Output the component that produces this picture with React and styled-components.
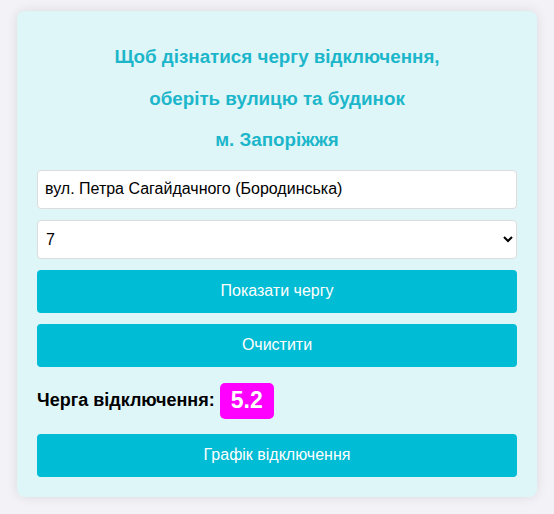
import styled, { createGlobalStyle } from 'styled-components'

const GlobalStyle = createGlobalStyle`
    body {
        margin: 0;
        background-color: #f3f2f7;
        font-family: "Liberation Sans", Arial, sans-serif;
    }
`

const Page = styled.div`
    padding: 11px 17px;
`

const Card = styled.div`
    width: 520px;
    box-sizing: border-box;
    padding: 25px 20px 20px 20px;
    background-color: #dff6f9;
    border-radius: 8px;
    box-shadow: 0 0 12px rgba(0, 0, 0, 0.1);
`

const Title = styled.div`
    text-align: center;
    color: #1cb6ca;
    font-size: 18.8px;
    font-weight: bold;
    line-height: 41.5px;
    margin-bottom: 9px;
`

const Form = styled.div`
    display: flex;
    flex-direction: column;
    gap: 11px;
`

const Field = styled.input`
    height: 39px;
    box-sizing: border-box;
    padding: 0 7px;
    border: 1px solid #dcdcdc;
    border-radius: 4px;
    background: #fff;
    font-family: inherit;
    font-size: 16px;
    color: #000;
`

const Select = styled.select`
    height: 39px;
    box-sizing: border-box;
    padding: 0 4px;
    border: 1px solid #dcdcdc;
    border-radius: 4px;
    background: #fff;
    font-family: inherit;
    font-size: 16px;
    color: #000;
`

const Button = styled.button`
    height: 43px;
    border: none;
    border-radius: 4px;
    background-color: #00bcd4;
    color: #fff;
    font-family: inherit;
    font-size: 16px;
    cursor: pointer;
`

const Result = styled.div`
    display: flex;
    align-items: center;
    gap: 5px;
    margin: 5px 0 4px 0;
    font-size: 18px;
    font-weight: bold;
    color: #000;
`

const Badge = styled.span`
    display: inline-flex;
    align-items: center;
    justify-content: center;
    height: 36px;
    padding: 0 11px;
    border-radius: 5px;
    background-color: #ff00ff;
    color: #fff;
    font-size: 23px;
    font-weight: bold;
`

const App = () => {
    return (
        <Page>
            <GlobalStyle />
            <Card>
                <Title>
                    <div>Щоб дізнатися чергу відключення,</div>
                    <div>оберіть вулицю та будинок</div>
                    <div>м. Запоріжжя</div>
                </Title>
                <Form>
                    <Field defaultValue="вул. Петра Сагайдачного (Бородинська)" />
                    <Select defaultValue="7">
                        <option value="7">7</option>
                    </Select>
                    <Button>Показати чергу</Button>
                    <Button>Очистити</Button>
                    <Result>
                        Черга відключення: <Badge>5.2</Badge>
                    </Result>
                    <Button>Графік відключення</Button>
                </Form>
            </Card>
        </Page>
    )
}

export default App
